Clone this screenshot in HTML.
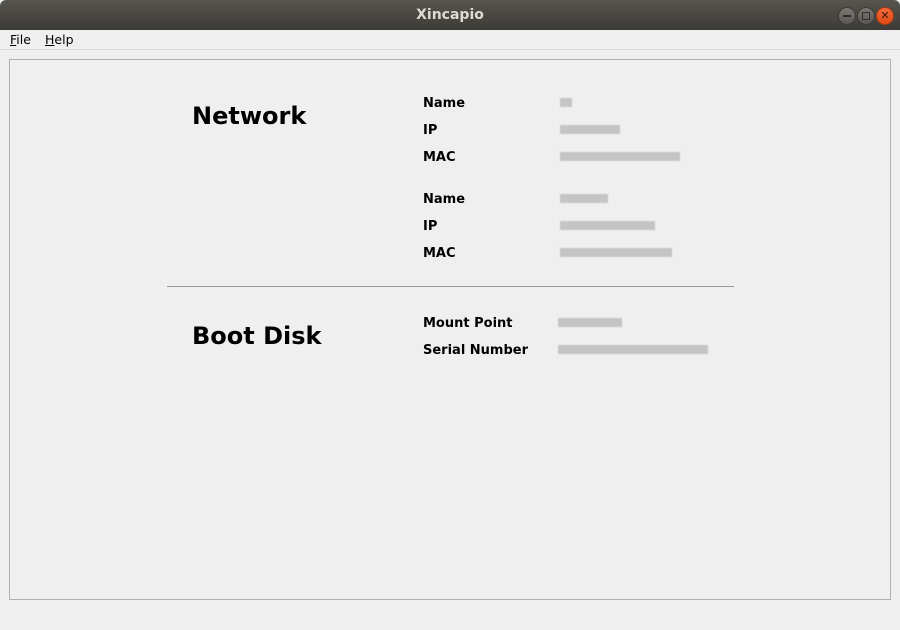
<!DOCTYPE html><html><head><style>
body{margin:0;width:900px;height:630px;background:#efefef;font-family:"DejaVu Sans","Liberation Sans",sans-serif;position:relative;overflow:hidden}
.a{position:absolute}
.t{top:0;left:0;width:900px;height:30px;background:linear-gradient(#57554f,#3c3b37);color:#dfdbd2;font-weight:bold;font-size:14px;text-align:center;line-height:30px;border-radius:6px 6px 0 0}
.b{width:16px;height:16px;border-radius:50%;top:7px;background:linear-gradient(#7a7873,#5a5853);border:1px solid #3a3935}
.l{font-weight:bold;font-size:13px;color:#000}
.h{font-weight:bold;font-size:24px}
.v{height:9px;background:#c4c4c4;filter:blur(0.6px)}
.m{font-size:12.5px;top:32px}
</style></head><body>
<div class="a t">Xincapio</div>
<div class="a b" style="left:838px"><div class="a" style="left:4px;top:7px;width:8px;height:1.5px;background:#2e2d2a"></div></div>
<div class="a b" style="left:857px"><div class="a" style="left:4px;top:4px;width:6px;height:6px;border:1.5px solid #2e2d2a"></div></div>
<div class="a b" style="left:876px;background:linear-gradient(#f26a3a,#df4a16);border-color:#a83a10"><div class="a" style="left:0;top:0;width:16px;line-height:16px;text-align:center;font-size:11px;color:#3a1a0a;font-weight:bold">✕</div></div>
<div class="a m" style="left:10px"><u>F</u>ile</div>
<div class="a m" style="left:45px"><u>H</u>elp</div>
<div class="a" style="left:0;top:49px;width:900px;height:1px;background:#d8d8d8"></div>
<div class="a" style="left:9px;top:59px;width:880px;height:539px;border:1px solid #b0b0b0"></div>
<div class="a h" style="left:192px;top:102px">Network</div>
<div class="a h" style="left:192px;top:322px">Boot Disk</div>
<div class="a" style="left:167px;top:286px;width:567px;height:1px;background:#999"></div>
<div class="a l" style="left:423px;top:96px">Name</div>
<div class="a l" style="left:423px;top:123px">IP</div>
<div class="a l" style="left:423px;top:150px">MAC</div>
<div class="a l" style="left:423px;top:192px">Name</div>
<div class="a l" style="left:423px;top:219px">IP</div>
<div class="a l" style="left:423px;top:246px">MAC</div>
<div class="a l" style="left:423px;top:316px">Mount Point</div>
<div class="a l" style="left:423px;top:343px">Serial Number</div>
<div class="a v" style="left:560px;top:98px;width:12px"></div>
<div class="a v" style="left:560px;top:125px;width:60px"></div>
<div class="a v" style="left:560px;top:152px;width:120px"></div>
<div class="a v" style="left:560px;top:194px;width:48px"></div>
<div class="a v" style="left:560px;top:221px;width:95px"></div>
<div class="a v" style="left:560px;top:248px;width:112px"></div>
<div class="a v" style="left:558px;top:318px;width:64px"></div>
<div class="a v" style="left:558px;top:345px;width:150px"></div>
</body></html>
